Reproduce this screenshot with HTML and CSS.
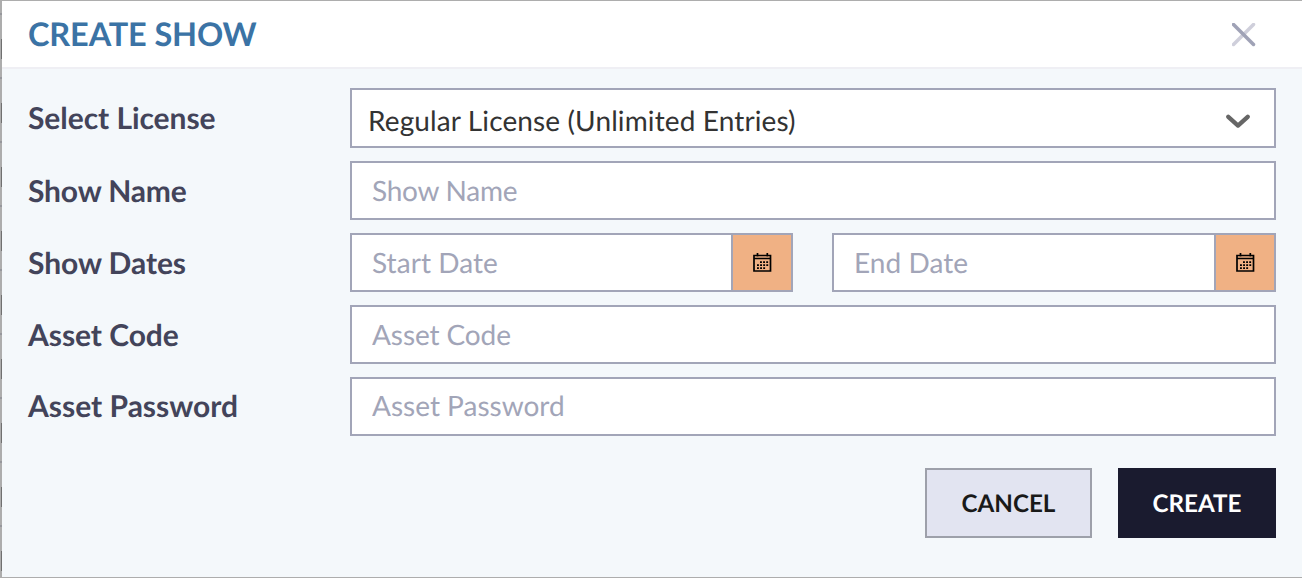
FILE: index.html
```html
<!DOCTYPE html>
<html lang="en">
<head>
<meta charset="utf-8">
<title>Create Show</title>
<link rel="stylesheet" href="styles.css">
</head>
<body>
<svg class="symbols" aria-hidden="true">
  <symbol id="calendar" viewBox="0 0 20 20">
    <path d="M2 2.5H18.5V18H2Z M2 5.5H18.5 M5.5 0V3.5 M15.3 0V3.5" fill="none" stroke="#000" stroke-width="1.7"/>
    <path d="M8 9.1H17M5 12.2H17M5 15.2H14" fill="none" stroke="#000" stroke-width="1.7" stroke-dasharray="1.9 1.2"/>
  </symbol>
</svg>
<div class="dialog" role="dialog">
  <header class="header">
    <h1 class="title">CREATE SHOW</h1>
    <svg class="close" viewBox="0 0 24 24"><path d="M21.5 1.5L1.5 21.5" stroke="#cfcfdb"/><path d="M1.5 1.5L21.5 21.5" stroke="#9fa2b6"/></svg>
  </header>
  <form class="form">
    <div class="row row-select">
      <label class="label">Select License</label>
      <div class="field select"><span class="value">Regular License (Unlimited Entries)</span>
        <svg class="chevron" viewBox="0 0 24 14"><path d="M2.3 2.8L12 11.6L21.7 2.8"/></svg>
      </div>
    </div>
    <div class="row row-name">
      <label class="label">Show Name</label>
      <input class="field" placeholder="Show Name">
    </div>
    <div class="row">
      <label class="label">Show Dates</label>
      <div class="dates">
        <div class="date"><input class="field" placeholder="Start Date"><span class="picker"><svg class="cal"><use href="#calendar"/></svg></span></div>
        <div class="date"><input class="field" placeholder="End Date"><span class="picker"><svg class="cal"><use href="#calendar"/></svg></span></div>
      </div>
    </div>
    <div class="row row-code">
      <label class="label">Asset Code</label>
      <input class="field" placeholder="Asset Code">
    </div>
    <div class="row row-password">
      <label class="label">Asset Password</label>
      <input class="field" placeholder="Asset Password">
    </div>
    <div class="actions">
      <button type="button" class="btn cancel">CANCEL</button>
      <button type="button" class="btn create">CREATE</button>
    </div>
  </form>
</div>
</body>
</html>
```
FILE: styles.css
```css
* { box-sizing: border-box; }
body {
  margin: 0;
  height: 578px;
  padding: 1px 0 1px 2px;
  font-family: Lato, sans-serif;
  text-rendering: geometricPrecision;
  background:
    repeating-linear-gradient(to bottom, #707070 0 20px, transparent 20px 64px) 1px 39px / 1px 539px no-repeat,
    repeating-linear-gradient(to bottom, #96979c 0 2px, transparent 2px 64px) 0 13px / 2px 565px no-repeat,
    #adadad;
}
.symbols { position: absolute; width: 0; height: 0; }
.dialog { height: 576px; background: #f4f8fb; }
.header {
  display: flex;
  align-items: center;
  justify-content: space-between;
  height: 68px;
  padding: 0 46px 0 26px;
  background: #fff;
  border-bottom: 2px solid #efeff4;
}
.title { margin: 0; font-size: 32.5px; line-height: 40px; font-weight: 700; letter-spacing: -0.15px; color: #3b73a5; }
.close { width: 24px; height: 24px; margin-top: 1px; stroke-width: 3.5; stroke-linecap: round; }
.form { display: flex; flex-direction: column; gap: 13px; padding: 19px 26px 0; }
.row { display: grid; grid-template-columns: 322px 926px; height: 59px; }
.row-select { height: 60px; }
.label {
  display: flex;
  align-items: center;
  padding-top: 2px;
  font-size: 30px;
  line-height: 37px;
  font-weight: 700;
  letter-spacing: -0.06px;
  color: #43445a;
}
.row-select .label { padding-bottom: 1px; }
.row-name .label { letter-spacing: -0.15px; }
.row-password .label { padding-bottom: 2px; letter-spacing: 0; }
.field {
  width: 100%;
  min-width: 0;
  height: 100%;
  padding: 0 20px 2px;
  border: 2px solid #a2a5b8;
  border-radius: 0;
  outline: 0;
  background: #fff;
  font: 400 28px Lato, sans-serif;
  text-rendering: geometricPrecision;
  color: #333;
}
.field::placeholder { color: #a2a5b8; opacity: 1; }
.row-name .field { letter-spacing: -0.25px; }
.row-code .field { letter-spacing: -0.1px; }
.row-password .field { padding-bottom: 4px; }
.select { display: flex; align-items: center; justify-content: space-between; padding: 5px 24px 0 16px; }
.value { padding-bottom: 2px; letter-spacing: 0.12px; }
.chevron { width: 24px; height: 14px; fill: none; stroke: #666; stroke-width: 4.3; stroke-linecap: round; stroke-linejoin: round; }
.dates { display: grid; grid-template-columns: 443px 444px; gap: 39px; }
.date { display: flex; height: 59px; }
.date .field { flex: 1; border-right: 0; letter-spacing: 0.06px; }
.picker {
  display: flex;
  align-items: center;
  justify-content: center;
  width: 62px;
  border: 2px solid #a2a5b8;
  background: #f0b184;
}
.cal { width: 20px; height: 20px; }
.actions { display: flex; justify-content: flex-end; gap: 26px; padding-top: 19px; }
.btn { height: 70px; padding: 0; border: 0; font: 700 24.2px Lato, sans-serif; text-rendering: geometricPrecision; }
.cancel { width: 167px; border: 2px solid #9da0aa; background: #e2e4f1; color: #191919; }
.create { width: 158px; background: #1a1b2f; color: #fff; }
```
